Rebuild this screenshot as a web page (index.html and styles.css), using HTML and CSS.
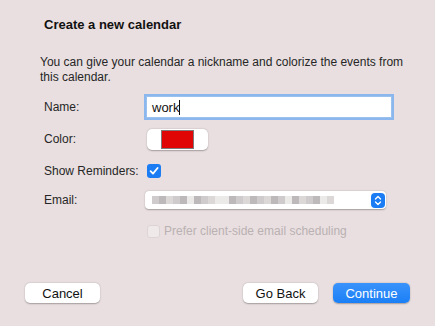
FILE: index.html
```html
<!DOCTYPE html>
<html lang="en">
<head>
  <meta charset="UTF-8" />
  <title>Create a new calendar</title>
  <link rel="stylesheet" href="styles.css">
</head>
<body>
  <div class="dialog">
    <h1 class="title">Create a new calendar</h1>
    <p class="intro">You can give your calendar a nickname and colorize the events from this calendar.</p>

    <div class="form">
      <div class="row row-name">
        <label for="name">Name:</label>
        <div class="text-field"><span class="value">work</span><span class="caret"></span></div>
      </div>

      <div class="row row-color">
        <label>Color:</label>
        <div class="color-well"><span class="swatch"></span></div>
      </div>

      <div class="row row-reminders">
        <label>Show Reminders:</label>
        <span class="checkbox checked">
          <svg width="10" height="10" viewBox="0 0 10 10"><path d="M1.6 5.2 L4 7.6 L8.6 2" fill="none" stroke="#fff" stroke-width="1.8" stroke-linecap="round" stroke-linejoin="round"/></svg>
        </span>
      </div>

      <div class="row row-email">
        <label>Email:</label>
        <div class="popup">
          <span class="blurred">
            <i class="s1"></i><i class="s2"></i><i class="s3"></i><i class="s1"></i><i class="s2"></i><i class="s4"></i><i class="s2"></i><i class="s1"></i><i class="s3"></i><i class="s4"></i><i class="s4"></i><i class="s2"></i><i class="s1"></i><i class="s3"></i><i class="s2"></i><i class="s1"></i><i class="s3"></i><i class="s2"></i><i class="s1"></i><i class="s4"></i><i class="s2"></i><i class="s3"></i><i class="s1"></i><i class="s2"></i><i class="s4"></i><i class="s3"></i>
          </span>
          <span class="stepper">
            <svg width="8" height="11" viewBox="0 0 8 11"><path d="M1.5 4 L4 1.5 L6.5 4 M1.5 7 L4 9.5 L6.5 7" fill="none" stroke="#fff" stroke-width="1.4" stroke-linecap="round" stroke-linejoin="round"/></svg>
          </span>
        </div>
      </div>

      <div class="row row-prefer">
        <span></span>
        <div class="disabled-option">
          <span class="checkbox disabled"></span>
          <span>Prefer client-side email scheduling</span>
        </div>
      </div>
    </div>

    <div class="footer">
      <button type="button" class="btn">Cancel</button>
      <div class="footer-right">
        <button type="button" class="btn">Go Back</button>
        <button type="button" class="btn primary">Continue</button>
      </div>
    </div>
  </div>
</body>
</html>
```

FILE: styles.css
```css
* {
  box-sizing: border-box;
  margin: 0;
  padding: 0;
  font-family: 'Liberation Sans', Arial, sans-serif;
}
html, body {
  width: 435px;
  height: 326px;
  overflow: hidden;
}
body {
  background: #e9dfe0;
  color: #222;
}
.dialog {
  height: 326px;
  padding: 17px 25px 0 40px;
  display: flex;
  flex-direction: column;
}
.title {
  font-size: 13px;
  font-weight: bold;
  color: #111;
  margin-left: 4px;
  line-height: 16px;
}
.intro {
  font-size: 12px;
  line-height: 15px;
  margin-top: 22px;
  color: #262626;
  width: 372px;
}
.form {
  margin-top: 11px;
  margin-left: 4px;
}
.row {
  display: grid;
  grid-template-columns: 102px 1fr;
  align-items: center;
  font-size: 12px;
}
.row label {
  color: #262626;
}
.row-name { height: 22px; }
.row-color { height: 22px; margin-top: 10px; }
.row-reminders { height: 14px; margin-top: 14px; }
.row-email { height: 18px; margin-top: 13px; }
.row-prefer { height: 13px; margin-top: 15px; }

.text-field {
  width: 246px;
  height: 22px;
  background: #fff;
  border: 1px solid #9bc1ef;
  box-shadow: 0 0 0 2px #8cb6ee;
  display: flex;
  align-items: center;
  padding-left: 5px;
  font-size: 13px;
  color: #111;
}
.caret {
  width: 1px;
  height: 15px;
  background: #111;
}

.color-well {
  width: 61px;
  height: 21px;
  margin-left: 1px;
  background: #fff;
  border-radius: 5px;
  box-shadow: 0 0.5px 1.5px rgba(0, 0, 0, 0.3);
  display: flex;
  justify-content: center;
  align-items: center;
}
.swatch {
  width: 33px;
  height: 19px;
  background: #e00606;
  border: 1px solid #7f7979;
}

.checkbox {
  width: 14px;
  height: 14px;
  border-radius: 3px;
  display: flex;
  align-items: center;
  justify-content: center;
  margin-left: 1px;
}
.checkbox.checked {
  background: #1b7cf4;
}
.checkbox.disabled {
  width: 13px;
  height: 13px;
  background: #efe9ea;
  border: 1px solid #dcd4d5;
  margin-left: 0;
}

.popup {
  width: 241px;
  height: 18px;
  margin-left: -1px;
  background: #fff;
  border-radius: 4px;
  box-shadow: 0 0.5px 1.5px rgba(0, 0, 0, 0.3);
  display: flex;
  align-items: center;
  justify-content: space-between;
  padding: 0 1px 0 7px;
}
.blurred {
  display: flex;
  height: 8px;
}
.blurred i {
  width: 7px;
  height: 8px;
}
.blurred .s1 { background: #cfcacb; }
.blurred .s2 { background: #bdb8b9; }
.blurred .s3 { background: #dcd8d8; }
.blurred .s4 { background: #ece9e9; }
.stepper {
  width: 14px;
  height: 15px;
  background: #1b7cf4;
  border-radius: 4px;
  display: flex;
  align-items: center;
  justify-content: center;
}

.disabled-option {
  display: flex;
  align-items: center;
  gap: 4px;
  margin-left: 1px;
  font-size: 12px;
  color: #b9b1b2;
}

.footer {
  margin-top: auto;
  margin-left: -15px;
  margin-bottom: 23px;
  display: flex;
  justify-content: space-between;
}
.footer-right {
  display: flex;
  gap: 15px;
}
.btn {
  height: 20px;
  width: 75px;
  border: none;
  border-radius: 5px;
  background: #fff;
  box-shadow: 0 0.5px 1.5px rgba(0, 0, 0, 0.3);
  font-size: 13px;
  color: #111;
}
.btn.primary {
  width: 77px;
  background: linear-gradient(#3b93fb, #1a7ff6);
  color: #fff;
}
```
